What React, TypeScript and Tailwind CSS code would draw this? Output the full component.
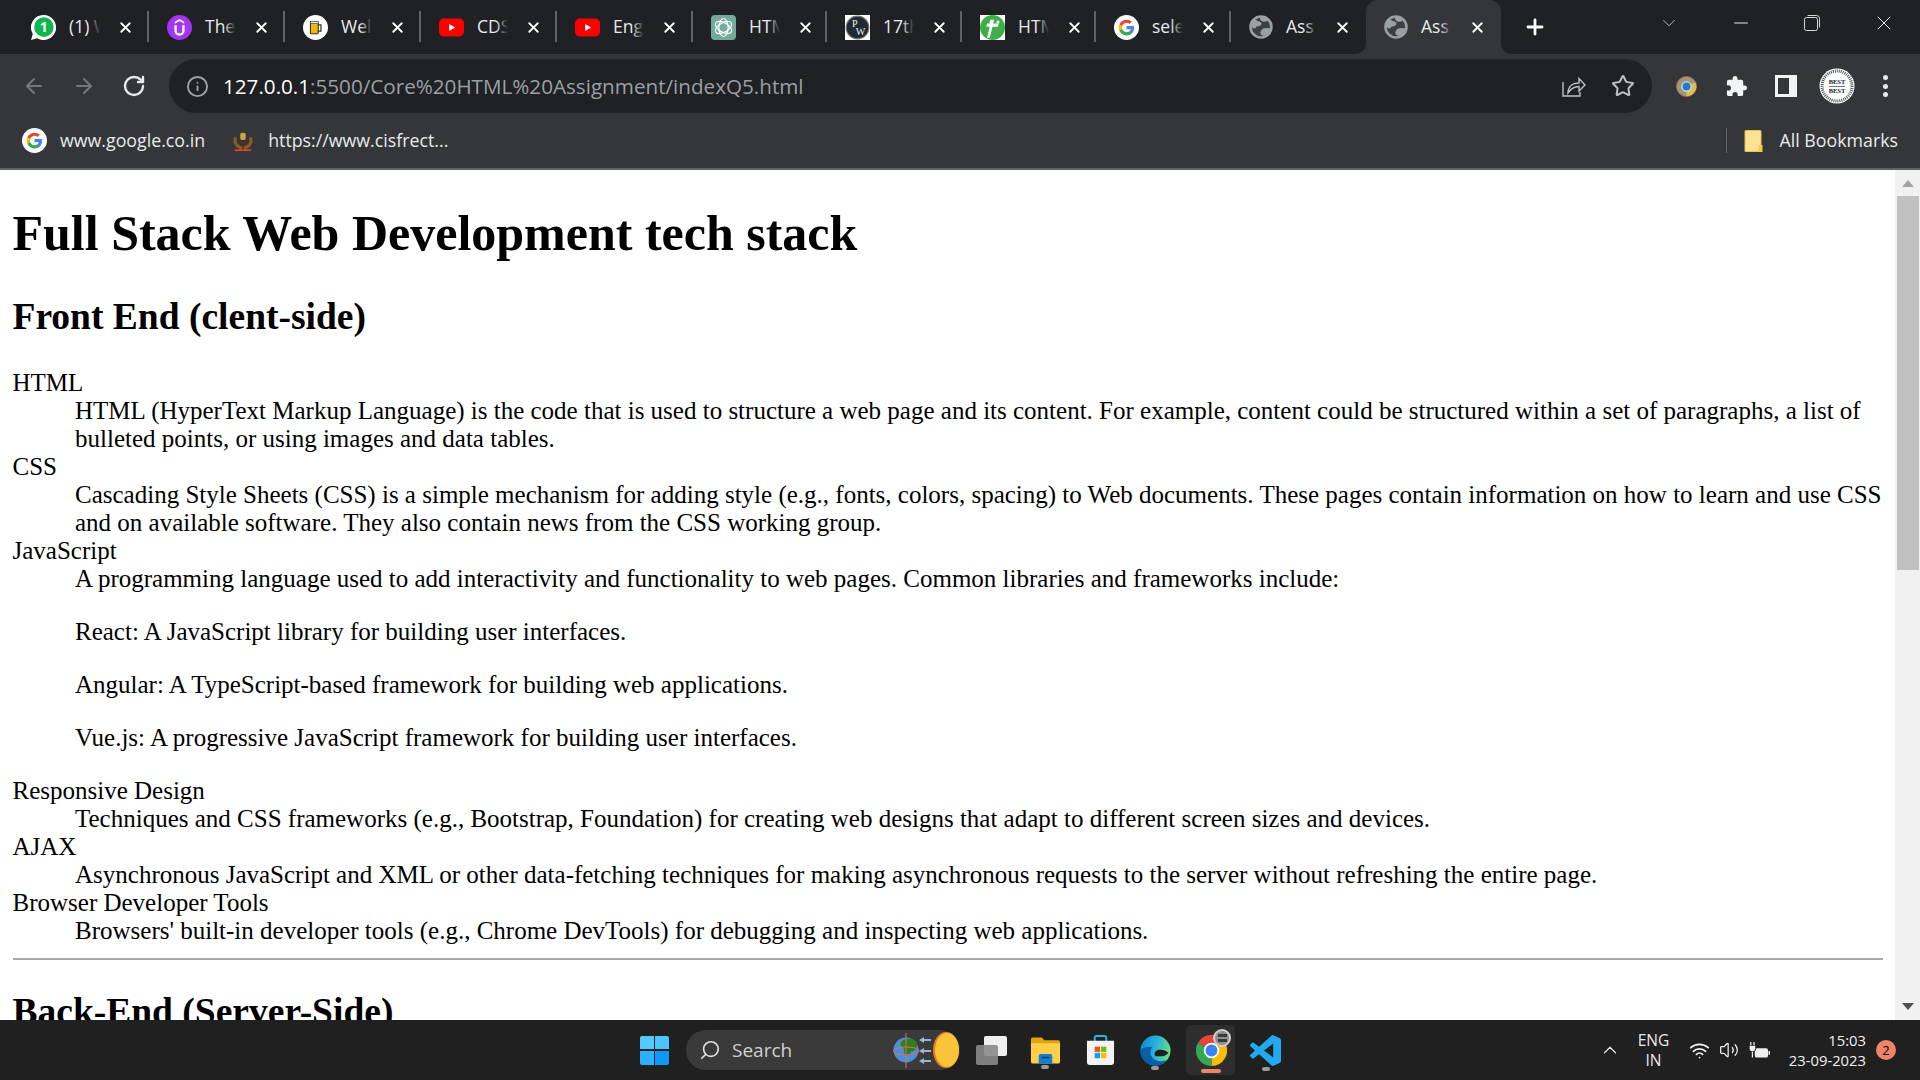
import React from "react";
import { ArrowLeft, ArrowRight, RotateCw, Info, Star, X, Plus, ChevronDown, ChevronUp, Minus, Search, Wifi, Volume2 } from "lucide-react";

const GooglePaths = () => (
  <>
    <path fill="#4285F4" d="M22.56 12.25c0-.78-.07-1.53-.2-2.25H12v4.26h5.92c-.26 1.37-1.04 2.53-2.21 3.31v2.77h3.57c2.08-1.92 3.28-4.74 3.28-8.09z" />
    <path fill="#34A853" d="M12 23c2.97 0 5.46-.98 7.28-2.66l-3.57-2.77c-.98.66-2.23 1.06-3.71 1.06-2.86 0-5.29-1.93-6.16-4.53H2.18v2.84C3.99 20.53 7.7 23 12 23z" />
    <path fill="#FBBC05" d="M5.84 14.09c-.22-.66-.35-1.36-.35-2.09s.13-1.43.35-2.09V7.07H2.18C1.43 8.55 1 10.22 1 12s.43 3.45 1.18 4.93l3.66-2.84z" />
    <path fill="#EA4335" d="M12 5.38c1.62 0 3.06.56 4.21 1.64l3.15-3.15C17.45 2.09 14.97 1 12 1 7.7 1 3.99 3.47 2.18 7.07l3.66 2.84c.87-2.6 3.3-4.53 6.16-4.53z" />
  </>
);

const GoogleIcon = () => (
  <svg viewBox="0 0 32 32" className="w-[25px] h-[25px] shrink-0">
    <circle cx="16" cy="16" r="16" fill="#fff" />
    <g transform="translate(5 5) scale(0.92)"><GooglePaths /></g>
  </svg>
);

const WhatsApp = () => (
  <svg viewBox="0 0 32 32" className="w-[25px] h-[25px] shrink-0">
    <path fill="#fff" d="M16 0a16 16 0 0 0-13.7 24.2L0 32l8-2.2A16 16 0 1 0 16 0z" />
    <circle cx="16.5" cy="15.5" r="12.5" fill="#0fb64f" />
    <text x="16.5" y="22" textAnchor="middle" fontSize="18" fontWeight="700" fill="#fff" fontFamily="Open Sans, sans-serif">1</text>
  </svg>
);

const Udemy = () => (
  <svg viewBox="0 0 32 32" className="w-[25px] h-[25px] shrink-0">
    <circle cx="16" cy="16" r="16" fill="#a435f0" />
    <path d="M10 8.5 16 5l6 3.5v2.6l-6-3.5-6 3.5z" fill="#fff" />
    <path d="M11 13v7a5 5 0 0 0 10 0v-7" fill="none" stroke="#fff" strokeWidth="3" />
  </svg>
);

const Beer = () => (
  <svg viewBox="0 0 32 32" className="w-[25px] h-[25px] shrink-0">
    <circle cx="16" cy="16" r="16" fill="#fff" />
    <rect x="9.5" y="9" width="10" height="15" rx="1" fill="#f2b705" stroke="#333" strokeWidth="1.4" />
    <path d="M19.5 12.5h3.5v8h-3.5" fill="none" stroke="#333" strokeWidth="1.6" />
    <rect x="9.5" y="8" width="10" height="3" fill="#eee" stroke="#333" strokeWidth="0.8" />
  </svg>
);

const YouTube = () => (
  <svg viewBox="0 0 32 32" className="w-[25px] h-[25px] shrink-0">
    <rect x="0" y="4.5" width="32" height="23" rx="6" fill="#f00" />
    <path d="M13 11.5v9l7.5-4.5z" fill="#fff" />
  </svg>
);

const ChatGPT = () => (
  <svg viewBox="0 0 32 32" className="w-[25px] h-[25px] shrink-0">
    <rect width="32" height="32" rx="5" fill="#74aa9c" />
    <g fill="none" stroke="#fff" strokeWidth="1.5">
      <ellipse cx="16" cy="16" rx="6" ry="11.5" />
      <ellipse cx="16" cy="16" rx="6" ry="11.5" transform="rotate(60 16 16)" />
      <ellipse cx="16" cy="16" rx="6" ry="11.5" transform="rotate(120 16 16)" />
    </g>
  </svg>
);

const PW = () => (
  <svg viewBox="0 0 32 32" className="w-[25px] h-[25px] shrink-0">
    <rect width="32" height="32" fill="#fff" />
    <circle cx="16" cy="16" r="14.5" fill="#1f2a30" stroke="#777" strokeWidth="1.5" />
    <text x="12.5" y="15" textAnchor="middle" fontSize="13" fill="#eee" fontFamily="Liberation Serif, serif">P</text>
    <text x="20" y="26" textAnchor="middle" fontSize="13" fill="#eee" fontFamily="Liberation Serif, serif">W</text>
  </svg>
);

const GreenT = () => (
  <svg viewBox="0 0 32 32" className="w-[25px] h-[25px] shrink-0">
    <rect width="32" height="32" fill="#fff" />
    <circle cx="16" cy="16" r="16" fill="#3fae49" />
    <path d="M13 6h5l-1 5h7l-1 4h-7l-3.5 14H9l3.5-14H8l1-4h3z" fill="#fff" />
    <circle cx="23" cy="9" r="2" fill="#fff" />
  </svg>
);

const Globe = () => (
  <svg viewBox="0 0 32 32" className="w-[24px] h-[24px] shrink-0">
    <circle cx="16" cy="16" r="14" fill="#3c4043" stroke="#9aa0a6" strokeWidth="3.5" />
    <path d="M6 5c4 3 8 3 10 5s-1 5-4 5-3 3-5 3-4-3-5-5 1-6 4-8zM19 18c3-1 7-1 10 0-1 5-5 9-9 10-3-1-5-2-5-4s2-5 4-6z" fill="#9aa0a6" />
    <path d="M15 2.5c3 1 9 1 11 4-2 2-5 3-8 2s-4-4-3-6z" fill="#9aa0a6" />
  </svg>
);

type T = { icon: React.ReactNode; label: string; w: string; sep: boolean; active?: boolean };
const tabs: T[] = [
  { icon: <WhatsApp />, label: "(1) W", w: "w-[136px]", sep: true },
  { icon: <Udemy />, label: "The", w: "w-[136px]", sep: true },
  { icon: <Beer />, label: "Wel", w: "w-[136px]", sep: true },
  { icon: <YouTube />, label: "CDS", w: "w-[136px]", sep: true },
  { icon: <YouTube />, label: "Eng", w: "w-[136px]", sep: true },
  { icon: <ChatGPT />, label: "HTM", w: "w-[134px]", sep: true },
  { icon: <PW />, label: "17th", w: "w-[135px]", sep: true },
  { icon: <GreenT />, label: "HTM", w: "w-[134px]", sep: true },
  { icon: <GoogleIcon />, label: "sele", w: "w-[135px]", sep: true },
  { icon: <Globe />, label: "Ass", w: "w-[135px]", sep: false },
  { icon: <Globe />, label: "Ass", w: "w-[135px]", sep: false, active: true },
];

const Tab = ({ t }: { t: T }) => (
  <div className={`relative flex items-center ${t.w} h-[54px] pl-[18px] shrink-0 ${t.active ? "bg-[#35363a] rounded-t-[12px]" : ""}`}>
    {t.icon}
    <div className="relative ml-[13px] mb-[2px] w-[31px] overflow-hidden whitespace-nowrap text-[17.5px] text-[#e8eaed] leading-[24px]">
      {t.label}
      <div className={`absolute right-0 top-0 h-full w-[12px] bg-linear-to-r from-transparent ${t.active ? "to-[#35363a]" : "to-[#202124]"}`} />
    </div>
    <X size={17} strokeWidth={2.6} className="ml-[16.5px] text-white shrink-0" />
    {t.sep && <div className="absolute right-0 top-[11px] h-[31px] w-[2px] bg-[#5f6368]" />}
    {t.active && (
      <>
        <div className="absolute -left-[10px] bottom-0 w-[10px] h-[10px] bg-[#35363a]"><div className="w-full h-full bg-[#202124] rounded-br-[10px]" /></div>
        <div className="absolute -right-[10px] bottom-0 w-[10px] h-[10px] bg-[#35363a]"><div className="w-full h-full bg-[#202124] rounded-bl-[10px]" /></div>
      </>
    )}
  </div>
);

const RestoreIcon = () => (
  <svg viewBox="0 0 18 18" className="w-[18px] h-[18px]" fill="none" stroke="#d8d8d8" strokeWidth="1">
    <rect x="1.5" y="3.5" width="13" height="13" rx="2" />
    <path d="M4.5 1.5h9a3 3 0 0 1 3 3v9" />
  </svg>
);

const ShareIcon = () => (
  <svg viewBox="0 0 24 24" className="w-[24px] h-[24px]" fill="none" stroke="#bdc1c6" strokeWidth="1.4">
    <path d="M1 8v14h17v-4" />
    <path d="M6 19c0-6 4-10 11-10V4.5l6 6.5-6 6v-4.5c-5 0-8 2-11 6.500z" />
  </svg>
);

const ChromeMark = ({ className }: { className: string }) => (
  <svg viewBox="0 0 24 24" className={className}>
    <path d="M12 12 1.600 6A12 12 0 0 1 22.400 6z" fill="#ea4335" />
    <path d="M12 12 22.400 6A12 12 0 0 1 12 24z" fill="#fbbc05" />
    <path d="M12 12 12 24A12 12 0 0 1 1.600 6z" fill="#34a853" />
    <circle cx="12" cy="12" r="6" fill="#fff" />
    <circle cx="12" cy="12" r="4.600" fill="#3b82f6" />
  </svg>
);

const ToolbarChrome = () => (
  <svg viewBox="0 0 24 24" className="w-[21px] h-[21px]">
    <circle cx="12" cy="12" r="11.500" fill="#9a9a78" stroke="#c65a5a" strokeWidth="1" />
    <path d="M12 12 22 7A11 11 0 0 1 12 23z" fill="#d9c24f" />
    <circle cx="12" cy="12" r="6" fill="#ddd" />
    <circle cx="12" cy="12" r="4.500" fill="#2a76c6" />
  </svg>
);

const PuzzleIcon = () => (
  <svg viewBox="0 0 24 24" className="w-[23px] h-[23px]" fill="#f1f3f4">
    <path d="M20.500 11H19V7a2 2 0 0 0-2-2h-4V3.500a2.500 2.500 0 0 0-5 0V5H4a2 2 0 0 0-2 2v3.800h1.500a2.700 2.700 0 0 1 0 5.400H2V20a2 2 0 0 0 2 2h3.800v-1.500a2.700 2.700 0 0 1 5.400 0V22H17a2 2 0 0 0 2-2v-4h1.500a2.500 2.500 0 0 0 0-5z" />
  </svg>
);

const Avatar = () => (
  <svg viewBox="0 0 36 36" className="w-[36px] h-[36px]">
    <circle cx="18" cy="18" r="17.500" fill="#fff" />
    <circle cx="18" cy="18" r="15" fill="none" stroke="#555" strokeWidth="3" strokeDasharray="1 1" />
    <text x="18" y="16" textAnchor="middle" fontSize="6.500" fontWeight="700" fill="#222" fontFamily="Liberation Serif, serif">BEST</text>
    <text x="18" y="25" textAnchor="middle" fontSize="6.500" fontWeight="700" fill="#222" fontFamily="Liberation Serif, serif">BEST</text>
    <rect x="10" y="18" width="16" height="1" fill="#777" />
  </svg>
);

const Emblem = () => (
  <svg viewBox="0 0 24 24" className="w-[22px] h-[24px]">
    <path d="M4 8c-2 5 0 10 7 12M20 8c2 5 0 10-7 12" fill="none" stroke="#8a5a28" strokeWidth="3.500" />
    <rect x="9" y="3" width="6" height="8" rx="2" fill="#c9a24a" />
    <path d="M7 12h10l-2 5H9z" fill="#4a3020" />
    <rect x="3" y="21" width="18" height="2" fill="#d8452e" />
  </svg>
);

const FolderIcon = () => (
  <svg viewBox="0 0 19 22" className="w-[19px] h-[22px]">
    <path d="M1 1.500A1 1 0 0 1 2 .5h14a1 1 0 0 1 1 1V21.500H1z" fill="#fde293" stroke="#f0c14b" />
    <rect x="14.500" y="15" width="4" height="7" fill="#f6c945" />
  </svg>
);

const Files = () => (
  <svg viewBox="0 0 32 28" className="w-[31px] h-[28px]">
    <path d="M1 3a2 2 0 0 1 2-2h9l3 3h14a2 2 0 0 1 2 2v4H1z" fill="#e0a410" />
    <path d="M1 7h29a1 1 0 0 1 1 1v18a2 2 0 0 1-2 2H3a2 2 0 0 1-2-2z" fill="#ffcf4a" />
    <path d="M9 20a2 2 0 0 1 2-2h10a2 2 0 0 1 2 2v8H9z" fill="#0f7fd6" />
    <rect x="12" y="21" width="8" height="1.500" fill="#063a6a" />
  </svg>
);

const Store = () => (
  <svg viewBox="0 0 30 32" className="w-[29px] h-[31px]">
    <path d="M9 8V3a2 2 0 0 1 2-2h8a2 2 0 0 1 2 2v5" fill="none" stroke="#27b4e8" strokeWidth="2" />
    <path d="M1 6h28v22a3 3 0 0 1-3 3H4a3 3 0 0 1-3-3z" fill="#f3f3f3" />
    <rect x="9" y="12" width="5.500" height="5.500" fill="#f25022" />
    <rect x="15.500" y="12" width="5.500" height="5.500" fill="#7fba00" />
    <rect x="9" y="18.500" width="5.500" height="5.500" fill="#00a4ef" />
    <rect x="15.500" y="18.500" width="5.500" height="5.500" fill="#ffb900" />
  </svg>
);

const Edge = () => (
  <svg viewBox="0 0 32 32" className="w-[31px] h-[31px]">
    <defs>
      <linearGradient id="edgeA" x1="0" y1="0.300" x2="1" y2="0.500">
        <stop offset="0" stopColor="#0c8fd8" />
        <stop offset="0.550" stopColor="#2bb5d6" />
        <stop offset="1" stopColor="#6fe07a" />
      </linearGradient>
    </defs>
    <circle cx="16" cy="16" r="15.500" fill="url(#edgeA)" />
    <path d="M.8 17c0 8 6.700 14.500 15.200 14.500 5 0 9-2 12-6-5 2.500-12 2-15-2-3-3.500-3-8 0-11-5 0-12.200 0-12.200 4.500z" fill="#0b5ea8" />
    <path d="M15 20c0-3 3-5 6-4.800 3 .1 6 1 8.500 3-2.500 3-5.500 3.800-8.500 3.800s-6 0-6-2z" fill="#1f1f1f" />
  </svg>
);

const VSCode = () => (
  <svg viewBox="0 0 24 24" className="w-[31px] h-[31px]">
    <path fill="#23a9f2" d="M23.150 2.587 18.210.21a1.494 1.494 0 0 0-1.705.29l-9.460 8.630-4.120-3.128a.999.999 0 0 0-1.276.057L.327 7.261A1 1 0 0 0 .326 8.740L3.899 12 .326 15.260a1 1 0 0 0 .001 1.479L1.650 17.940a.999.999 0 0 0 1.276.057l4.120-3.128 9.460 8.630a1.492 1.492 0 0 0 1.704.290l4.942-2.377A1.500 1.500 0 0 0 24 20.060V3.939a1.500 1.500 0 0 0-.850-1.352zm-5.146 14.861L10.826 12l7.178-5.448v10.896z" />
  </svg>
);

const WeatherArt = () => (
  <svg viewBox="0 0 66 40" className="w-[66px] h-[40px] shrink-0">
    <circle cx="13" cy="20" r="12.500" fill="#4a90d9" />
    <path d="M9 11c4-3 10-3 14 0 2 4 1 9-3 10-3 0-3 4-7 5-3-4-1-8-4-9-2-2-2-4 0-6z" fill="#2f7d1e" />
    <ellipse cx="13" cy="21" rx="13" ry="4" fill="none" stroke="#e0705a" strokeWidth="1" />
    <rect x="12.500" y="3" width="1" height="35" fill="#e0705a" />
    <g fill="#9db5d4">
      <rect x="30" y="9" width="8" height="2" /><path d="M26 10l5-3v6z" />
      <rect x="30" y="20" width="8" height="2" /><path d="M26 21l5-3v6z" />
      <rect x="30" y="30" width="8" height="2" /><path d="M26 31l5-3v6z" />
    </g>
    <ellipse cx="53" cy="20" rx="13" ry="18" fill="#e87b1e" />
    <ellipse cx="54" cy="20" rx="12" ry="17" fill="#f9c43a" />
  </svg>
);

const Battery = () => (
  <svg viewBox="0 0 22 18" className="w-[21px] h-[17px]">
    <rect x="6" y="6.500" width="14" height="10" rx="2" fill="#eee" />
    <rect x="20.500" y="9.500" width="1.500" height="4" fill="#eee" />
    <path d="M0 3.500h7v3.500a3.500 3.500 0 0 1-7 0z" fill="#eee" stroke="#202020" strokeWidth="1" />
    <path d="M1.800 0v3.500M5.200 0v3.500M3.500 10.500v6" stroke="#eee" fill="none" strokeWidth="1.300" />
  </svg>
);

const dd = "ml-[62.5px]";

export default function App() {
  return (
    <div className="w-[1920px] h-[1080px] overflow-hidden flex flex-col bg-white font-['Open_Sans',sans-serif]">
      {/* tab strip */}
      <div className="h-[54px] shrink-0 bg-[#202124] flex pl-[13px]">
        {tabs.map((t, i) => <Tab key={i} t={t} />)}
        <Plus size={24} strokeWidth={2.8} className="text-white ml-[22px] mt-[15px] shrink-0" />
        <ChevronDown size={22} strokeWidth={1} className="text-[#bdc1c6] ml-[111px] mt-[12px] shrink-0" />
        <Minus size={22} strokeWidth={1.1} className="text-[#e8eaed] ml-[50px] mt-[12px] shrink-0" />
        <div className="ml-[51px] mt-[14px] shrink-0"><RestoreIcon /></div>
        <X size={24} strokeWidth={1} className="text-[#e8eaed] ml-[51px] mt-[11px] shrink-0" />
      </div>
      {/* toolbar */}
      <div className="h-[62px] shrink-0 bg-[#35363a] flex items-center pt-[2px]">
        <ArrowLeft size={24} strokeWidth={2} className="text-[#75787c] ml-[22px] shrink-0" />
        <ArrowRight size={24} strokeWidth={2} className="text-[#75787c] ml-[26px] shrink-0" />
        <RotateCw size={24} strokeWidth={2.4} className="text-[#e8eaed] ml-[26px] shrink-0" />
        <div className="ml-[23px] w-[1483px] h-[54px] rounded-full bg-[#202124] flex items-center shrink-0">
          <Info size={23} strokeWidth={2} className="text-[#9aa0a6] ml-[16.5px] shrink-0" />
          <div className="ml-[14.5px] text-[20.65px] leading-[28px] whitespace-nowrap text-[#9aa0a6] w-[1240px]">
            <span className="text-white">127.0.0.1</span>:5500/Core%20HTML%20Assignment/indexQ5.html
          </div>
          <div className="ml-[99px]"><ShareIcon /></div>
          <Star size={24} strokeWidth={2} className="text-[#bdc1c6] ml-[25px] shrink-0" />
        </div>
        <div className="ml-[24px]"><ToolbarChrome /></div>
        <div className="ml-[28px]"><PuzzleIcon /></div>
        <div className="ml-[27px] w-[22px] h-[22px] bg-[#f1f3f4] p-[3px] pr-[8px] shrink-0"><div className="w-full h-full bg-[#35363a]" /></div>
        <div className="ml-[22px]"><Avatar /></div>
        <div className="ml-[28px] flex flex-col gap-[3.500px]">
          <div className="w-[5px] h-[5px] rounded-full bg-[#e8eaed]" />
          <div className="w-[5px] h-[5px] rounded-full bg-[#e8eaed]" />
          <div className="w-[5px] h-[5px] rounded-full bg-[#e8eaed]" />
        </div>
      </div>
      {/* bookmarks */}
      <div className="h-[54px] shrink-0 bg-[#35363a] border-b-[2px] border-[#5f6368] flex items-center pl-[22px] text-[17.8px] text-[#e8eaed] pb-[3px]">
        <GoogleIcon />
        <span className="ml-[13px] whitespace-nowrap">www.google.co.in</span>
        <div className="ml-[27px]"><Emblem /></div>
        <span className="ml-[14px] whitespace-nowrap">https://www.cisfrect...</span>
        <div className="ml-auto w-[1px] h-[25px] bg-[#5f6368]" />
        <div className="ml-[17px]"><FolderIcon /></div>
        <span className="ml-[17px] mr-[22px] whitespace-nowrap">All Bookmarks</span>
      </div>
      {/* page */}
      <div className="flex-1 min-h-0 flex overflow-hidden">
        <div className="flex-1 min-w-0 px-[12.500px] overflow-hidden font-['Liberation_Serif',serif] text-black text-[25px] leading-[28px]">
          <h1 className="mt-[34.500px] mb-[32.500px] text-[50px] leading-[57.500px] font-bold">Full Stack Web Development tech stack</h1>
          <h2 className="mb-[31px] text-[37.500px] leading-[43px] font-bold">Front End (clent-side)</h2>
          <dl>
            <dt>HTML</dt>
            <dd className={dd}>HTML (HyperText Markup Language) is the code that is used to structure a web page and its content. For example, content could be structured within a set of paragraphs, a list of bulleted points, or using images and data tables.</dd>
            <dt>CSS</dt>
            <dd className={dd}>Cascading Style Sheets (CSS) is a simple mechanism for adding style (e.g., fonts, colors, spacing) to Web documents. These pages contain information on how to learn and use CSS and on available software. They also contain news from the CSS working group.</dd>
            <dt>JavaScript</dt>
            <dd className={dd}>
              <p className="mb-[25px]">A programming language used to add interactivity and functionality to web pages. Common libraries and frameworks include:</p>
              <p className="mb-[25px]">React: A JavaScript library for building user interfaces.</p>
              <p className="mb-[25px]">Angular: A TypeScript-based framework for building web applications.</p>
              <p className="mb-[25px]">Vue.js: A progressive JavaScript framework for building user interfaces.</p>
            </dd>
            <dt>Responsive Design</dt>
            <dd className={dd}>Techniques and CSS frameworks (e.g., Bootstrap, Foundation) for creating web designs that adapt to different screen sizes and devices.</dd>
            <dt>AJAX</dt>
            <dd className={dd}>Asynchronous JavaScript and XML or other data-fetching techniques for making asynchronous requests to the server without refreshing the entire page.</dd>
            <dt>Browser Developer Tools</dt>
            <dd className={dd}>Browsers' built-in developer tools (e.g., Chrome DevTools) for debugging and inspecting web applications.</dd>
          </dl>
          <hr className="mt-[13px] border-t-[2px] border-[#a8a8a8]" />
          <h2 className="mt-[30.5px] text-[37.500px] leading-[43px] font-bold whitespace-nowrap">Back-End (Server-Side)</h2>
        </div>
        {/* scrollbar */}
        <div className="w-[25px] shrink-0 bg-[#f1f1f1] flex flex-col items-center">
          <div className="mt-[10px] w-0 h-0 border-x-[6px] border-x-transparent border-b-[7px] border-b-[#a3a3a3]" />
          <div className="mt-[9px] w-full pl-[2px] pr-[1px] h-[374px]"><div className="w-full h-full bg-[#c1c1c1]" /></div>
          <div className="mt-auto mb-[10px] w-0 h-0 border-x-[6px] border-x-transparent border-t-[7px] border-t-[#505050]" />
        </div>
      </div>
      {/* taskbar */}
      <div className="h-[60px] shrink-0 bg-[#202020] flex items-center text-white relative">
        <div className="ml-[640px] w-[29px] h-[29px] grid grid-cols-2 gap-[1.500px] shrink-0">
          <div className="bg-[#55c8ff] rounded-tl-[2px]" />
          <div className="bg-[#4cc4ff] rounded-tr-[2px]" />
          <div className="bg-[#2cb0ff] rounded-bl-[2px]" />
          <div className="bg-[#0f97fa] rounded-br-[2px]" />
        </div>
        <div className="ml-[17px] w-[274px] h-[40px] rounded-full bg-[#3a3a3a] flex items-center shrink-0">
          <Search size={22} strokeWidth={1.800} className="ml-[13px] text-[#e0e0e0] -scale-x-100 shrink-0" />
          <span className="ml-[11px] text-[19px] text-[#d0d0d0] w-[150px]">Search</span>
          <div className="ml-[11px]"><WeatherArt /></div>
        </div>
        {/* task view */}
        <div className="relative ml-[16px] w-[31px] h-[29px] shrink-0">
          <div className="absolute right-0 top-0 w-[23px] h-[20px] rounded-[2px] bg-[#f0f0f0]" />
          <div className="absolute left-0 bottom-0 w-[22px] h-[20px] rounded-[2px] bg-[#8a8a8a]/90" />
        </div>
        <div className="relative ml-[23px] shrink-0"><Files /><div className="absolute -bottom-[5px] left-[11px] w-[8px] h-[4px] rounded-full bg-[#9a9a9a]" /></div>
        <div className="ml-[25px] shrink-0"><Store /></div>
        <div className="relative ml-[25px] shrink-0"><Edge /><div className="absolute -bottom-[4px] left-[11px] w-[8px] h-[4px] rounded-full bg-[#9a9a9a]" /></div>
        <div className="relative ml-[15px] w-[49px] h-[50px] rounded-[5px] bg-[#2e2e2e] flex items-center pl-[10px] shrink-0">
          <ChromeMark className="w-[31px] h-[31px]" />
          <div className="absolute right-[4px] top-[4px] w-[18px] h-[18px] rounded-full bg-[#8f8f8f] border-[2px] border-[#cfcfcf] flex flex-col items-center justify-center gap-[2px]">
            <div className="w-[9px] h-[3px] bg-[#3a3a3a]" />
            <div className="w-[9px] h-[3px] bg-[#3a3a3a]" />
          </div>
          <div className="absolute bottom-[2px] left-[15px] w-[20px] h-[4px] rounded-full bg-[#f08468]" />
        </div>
        <div className="relative ml-[15px] shrink-0"><VSCode /><div className="absolute -bottom-[5px] left-[12px] w-[8px] h-[4px] rounded-full bg-[#9a9a9a]" /></div>
        <ChevronUp size={22} strokeWidth={1.300} className="ml-[318px] text-[#e8e8e8] shrink-0" />
        <div className="ml-[15.5px] w-[34px] flex flex-col items-center text-[15.5px] leading-[20px] text-[#e8e8e8] shrink-0"><span>ENG</span><span>IN</span></div>
        <Wifi size={21} strokeWidth={2} className="ml-[18.5px] text-[#f0f0f0] shrink-0" />
        <Volume2 size={20} strokeWidth={1.500} className="ml-[9px] text-[#f0f0f0] shrink-0" />
        <div className="ml-[10px]"><Battery /></div>
        <div className="ml-[9px] w-[87px] flex flex-col items-end text-[14.800px] leading-[20px] text-[#f0f0f0] shrink-0"><span>15:03</span><span className="whitespace-nowrap">23-09-2023</span></div>
        <div className="ml-[10px] w-[20px] h-[20px] rounded-full bg-[#f08468] text-black text-[13px] leading-[20px] text-center shrink-0">2</div>
      </div>
    </div>
  );
}
